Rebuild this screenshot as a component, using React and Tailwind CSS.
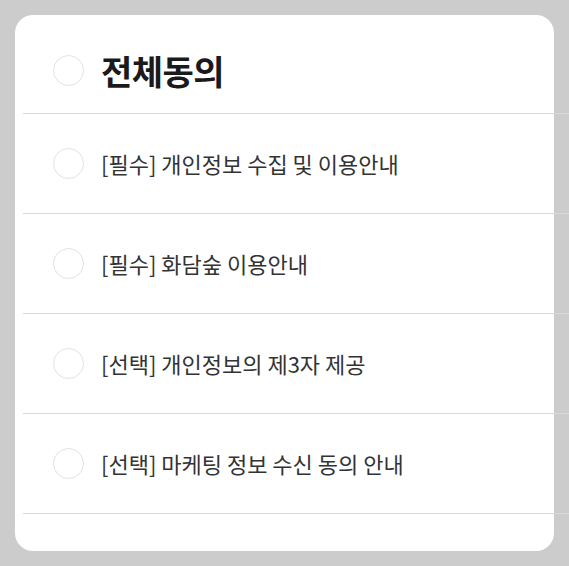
import React, { useState } from "react";

const items = [
  "[필수] 개인정보 수집 및 이용안내",
  "[필수] 화담숲 이용안내",
  "[선택] 개인정보의 제3자 제공",
  "[선택] 마케팅 정보 수신 동의 안내",
];

const Circle = ({ checked, onClick }) => (
  <button
    onClick={onClick}
    className={`w-[31px] h-[31px] rounded-full border-[1.5px] flex-shrink-0 ${
      checked ? "border-[#2f7d5a] bg-[#2f7d5a]" : "border-[#e2e2e2] bg-white"
    }`}
  />
);

export default function App() {
  const [checked, setChecked] = useState([false, false, false, false]);
  const all = checked.every(Boolean);

  const toggle = (i) => {
    const next = [...checked];
    next[i] = !next[i];
    setChecked(next);
  };

  return (
    <div
      className="w-screen h-screen overflow-hidden bg-[#cccccc] p-[15px]"
      style={{ fontFamily: '"Noto Sans CJK KR", "Noto Sans", sans-serif' }}
    >
      <div className="w-[539px] h-[536px] bg-white rounded-[18px]">
        <ul className="ml-[8px] w-[560px]">
          <li className="h-[99px] pt-[12px] pl-[30px] flex items-center gap-[17px] border-b border-[#d9d9d9]">
            <Circle checked={all} onClick={() => setChecked(items.map(() => !all))} />
            <span className="text-[34px] font-bold text-[#1a1a1a] tracking-[-0.5px]">전체동의</span>
          </li>
          {items.map((label, i) => (
            <li
              key={label}
              className="h-[100px] pl-[30px] flex items-center gap-[17px] border-b border-[#d9d9d9]"
            >
              <Circle checked={checked[i]} onClick={() => toggle(i)} />
              <span className="text-[22px] text-[#333333]">{label}</span>
            </li>
          ))}
        </ul>
      </div>
    </div>
  );
}
